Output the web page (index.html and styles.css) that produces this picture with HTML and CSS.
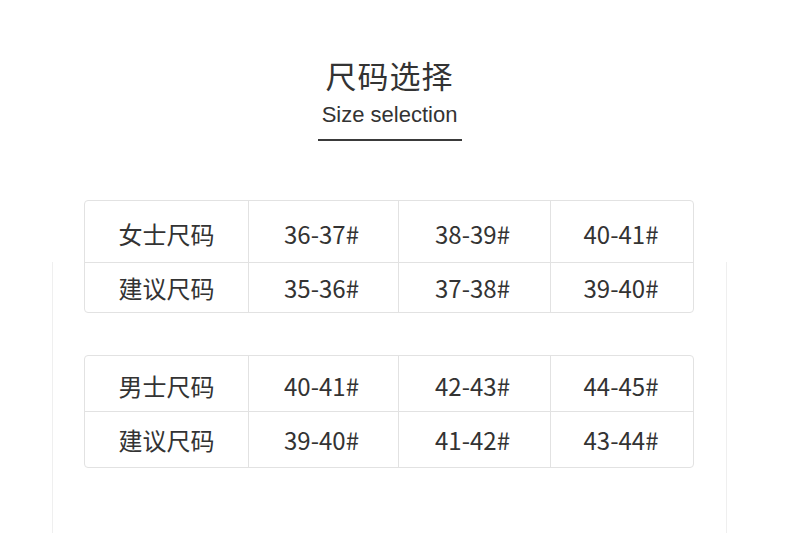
FILE: index.html
```html
<!DOCTYPE html>
<html lang="zh">
<head>
<meta charset="utf-8">
<title>尺码选择</title>
<link rel="stylesheet" href="styles.css">
</head>
<body>
<div class="page">
  <header class="head">
    <h1 class="title">尺码选择</h1>
    <p class="subtitle">Size selection</p>
    <div class="rule"></div>
  </header>
  <section class="tables">
    <div class="size-table">
      <div class="cell first c1">女士尺码</div>
      <div class="cell first c2">36-37#</div>
      <div class="cell first c3">38-39#</div>
      <div class="cell first c4">40-41#</div>
      <div class="cell second c1">建议尺码</div>
      <div class="cell second c2">35-36#</div>
      <div class="cell second c3">37-38#</div>
      <div class="cell second c4">39-40#</div>
    </div>
    <div class="size-table men">
      <div class="cell first c1">男士尺码</div>
      <div class="cell first c2">40-41#</div>
      <div class="cell first c3">42-43#</div>
      <div class="cell first c4">44-45#</div>
      <div class="cell second c1">建议尺码</div>
      <div class="cell second c2">39-40#</div>
      <div class="cell second c3">41-42#</div>
      <div class="cell second c4">43-44#</div>
    </div>
  </section>
</div>
</body>
</html>
```
FILE: styles.css
```css
html, body {
  margin: 0;
  padding: 0;
  background: #fff;
}
body {
  width: 797px;
  height: 533px;
  overflow: hidden;
  background-image:
    linear-gradient(#efefef, #efefef),
    linear-gradient(#efefef, #efefef);
  background-repeat: no-repeat;
  background-size: 1px 271px, 1px 271px;
  background-position: 52px 262px, 726px 262px;
  font-family: "Noto Sans CJK SC", "Noto Sans", sans-serif;
  color: #333;
}
.page {
  margin-left: 52px;
  width: 675px;
  padding-top: 52px;
}
.head {
  display: flex;
  flex-direction: column;
  align-items: center;
}
.title {
  margin: 0;
  font-size: 31px;
  line-height: 46px;
  font-weight: 400;
  color: #333;
  letter-spacing: 1px;
}
.subtitle {
  margin: 4px 0 0;
  font-family: "Liberation Sans", Arial, sans-serif;
  font-size: 22px;
  line-height: 26px;
  color: #333;
}
.rule {
  margin-top: 11px;
  width: 144px;
  height: 2px;
  background: #3a3a3a;
}
.tables {
  padding: 59px 33px 0 32px;
  display: flex;
  flex-direction: column;
  gap: 42px;
}
.size-table {
  display: grid;
  grid-template-columns: 164px 150px 152px 142px;
  grid-template-rows: 62px 49px;
  border: 1px solid #e2e2e2;
  border-radius: 4px;
  width: 608px;
}
.size-table.men {
  grid-template-rows: 56px 55px;
}
.cell {
  display: flex;
  align-items: center;
  justify-content: center;
  font-size: 24px;
  color: #333;
  box-sizing: border-box;
}
.first {
  border-bottom: 1px solid #e2e2e2;
  padding-top: 4px;
}
.c1, .c2, .c3 {
  border-right: 1px solid #e2e2e2;
}
.c4 {
  padding-right: 2px;
}
.c2 {
  padding-right: 4px;
}
.c3 {
  padding-right: 4px;
}
```
